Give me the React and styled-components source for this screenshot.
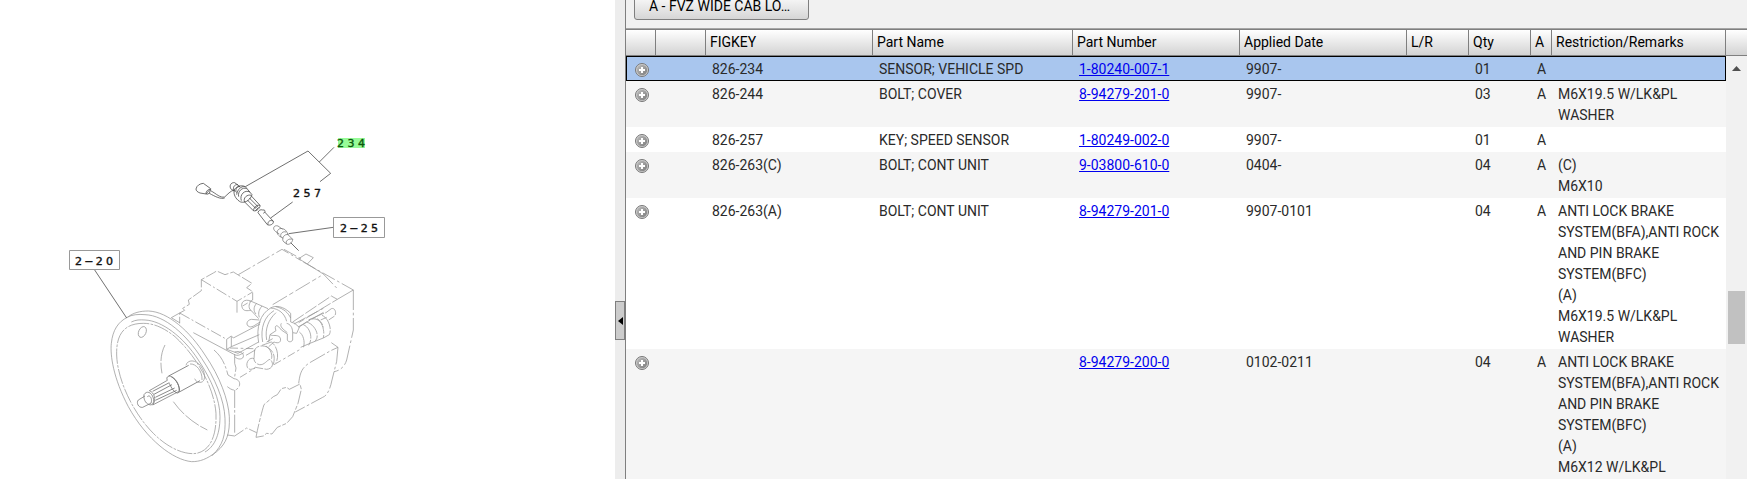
import styled, { createGlobalStyle } from 'styled-components';

const COLORS = {
  text: '#2a2a2a',
  link: '#0000ee',
  line: '#7f7f7f',
  panel: '#f1f1f1',
  stripe: '#f5f5f5',
  selected: '#a9c6ee',
};

const GlobalStyle = createGlobalStyle`
  * {
    box-sizing: border-box;
  }

  body {
    margin: 0;
    background: #ffffff;
    font-family: Roboto, sans-serif;
    font-size: 14px;
    line-height: 21px;
    color: ${COLORS.text};
  }
`;

const Page = styled.div`
  display: grid;
  grid-template-columns: minmax(0, 615fr) 10px minmax(0, 1122fr);
  height: 100vh;
  overflow: hidden;
`;

const FigurePane = styled.section`
  min-height: 0;
  background: #ffffff;
`;

const Drawing = styled.svg`
  display: block;
  width: 100%;
  height: 100%;
  fill: none;
  stroke: #999999;
  stroke-width: 2.3;
  stroke-linejoin: round;
`;

const Callout = styled.text`
  font-family: 'DejaVu Sans', sans-serif;
  font-size: 11px;
  fill: ${({ $active }) => ($active ? '#0b5a0b' : '#111111')};
  stroke: ${({ $active }) => ($active ? '#0b5a0b' : '#111111')};
  stroke-width: 0.4;
`;

const Splitter = styled.div`
  display: flex;
  flex-direction: column;
  justify-content: center;
  background: #ededed;
  padding-top: 162px;
`;

const CollapseButton = styled.button`
  display: flex;
  align-items: center;
  justify-content: flex-end;
  width: 10px;
  height: 39px;
  padding: 0 1px 0 0;
  border: 1px solid ${COLORS.line};
  background: #cccccc;
`;

const PartsPane = styled.section`
  display: flex;
  flex-direction: column;
  min-width: 0;
  min-height: 0;
  border-left: 1px solid ${COLORS.line};
`;

const Toolbar = styled.div`
  display: flex;
  align-items: flex-end;
  flex: 0 0 29px;
  padding: 0 8px 8px;
  overflow: hidden;
  border-bottom: 1px solid #a6a6a6;
  background: ${COLORS.panel};
`;

const ModelButton = styled.button`
  flex: 0 0 auto;
  width: 175px;
  height: 28px;
  padding: 0 14px;
  border: 1px solid ${COLORS.line};
  border-radius: 3px;
  background: linear-gradient(#ffffff, #d6d6d6);
  font: inherit;
  line-height: 12px;
  color: #000000;
  text-align: left;
`;

const TableArea = styled.div`
  display: flex;
  flex: 1;
  min-height: 0;
`;

const TableViewport = styled.div`
  flex: 1;
  min-width: 0;
  overflow: hidden;
`;

const Table = styled.table`
  width: 100%;
  table-layout: fixed;
  border-collapse: separate;
  border-spacing: 0;
`;

const Column = styled.col`
  width: ${({ $width }) => ($width ? `${$width}px` : 'auto')};
`;

const HeaderCell = styled.th`
  height: 27px;
  padding: 0 0 0 4px;
  border-top: 1px solid ${COLORS.line};
  border-right: 1px solid ${COLORS.line};
  border-bottom: 1px solid ${COLORS.line};
  background: linear-gradient(#ffffff, #d3d3d3);
  color: #000000;
  font-weight: 400;
  text-align: left;
  white-space: nowrap;
`;

const PartRow = styled.tr`
  background: #ffffff;

  &:nth-child(even) {
    background: ${COLORS.stripe};
  }

  &[aria-selected='true'] {
    background: ${COLORS.selected};
    outline: 1px solid #000000;
    outline-offset: -1px;
  }
`;

const Cell = styled.td`
  padding: 3px 0 1px 6px;
  vertical-align: top;
  white-space: pre-line;
`;

const IconCell = styled.td`
  padding: 7px 0 0 9px;
  vertical-align: top;
`;

const ExpandButton = styled.button`
  display: block;
  width: 14px;
  height: 14px;
  padding: 0;
  border: 0;
  background: none;
`;

const PartLink = styled.a`
  color: ${COLORS.link};
`;

const ScrollColumn = styled.div`
  display: flex;
  flex-direction: column;
  flex: 0 0 21px;
  background: ${COLORS.panel};
`;

const ScrollCap = styled.div`
  flex: 0 0 27px;
  border-top: 1px solid ${COLORS.line};
  border-bottom: 1px solid ${COLORS.line};
  background: linear-gradient(#ffffff, #d3d3d3);
`;

const ScrollUp = styled.button`
  display: flex;
  align-items: center;
  justify-content: center;
  flex: 0 0 24px;
  padding: 0;
  border: 0;
  background: none;
`;

const ScrollGap = styled.div`
  flex: ${({ $share }) => $share} 0 0;
`;

const ScrollThumb = styled.div`
  flex: 0 0 53px;
  margin: 0 2px;
  background: #c1c1c1;
`;

const columns = [
  { key: 'expand', label: '', width: 30 },
  { key: 'mark', label: '', width: 50 },
  { key: 'figkey', label: 'FIGKEY', width: 167 },
  { key: 'name', label: 'Part Name', width: 200 },
  { key: 'number', label: 'Part Number', width: 167 },
  { key: 'date', label: 'Applied Date', width: 167 },
  { key: 'side', label: 'L/R', width: 62 },
  { key: 'qty', label: 'Qty', width: 62 },
  { key: 'a', label: 'A', width: 21 },
  { key: 'remarks', label: 'Restriction/Remarks' },
];

const BRAKE = 'ANTI LOCK BRAKE SYSTEM(BFA),ANTI ROCK AND PIN BRAKE SYSTEM(BFC)';

const parts = [
  { figkey: '826-234', name: 'SENSOR; VEHICLE SPD', number: '1-80240-007-1', date: '9907-', qty: '01', remarks: '' },
  { figkey: '826-244', name: 'BOLT; COVER', number: '8-94279-201-0', date: '9907-', qty: '03', remarks: 'M6X19.5 W/LK&PL WASHER' },
  { figkey: '826-257', name: 'KEY; SPEED SENSOR', number: '1-80249-002-0', date: '9907-', qty: '01', remarks: '' },
  { figkey: '826-263(C)', name: 'BOLT; CONT UNIT', number: '9-03800-610-0', date: '0404-', qty: '04', remarks: '(C)\nM6X10' },
  { figkey: '826-263(A)', name: 'BOLT; CONT UNIT', number: '8-94279-201-0', date: '9907-0101', qty: '04', remarks: `${BRAKE}\n(A)\nM6X19.5 W/LK&PL WASHER` },
  { figkey: '', name: '', number: '8-94279-200-0', date: '0102-0211', qty: '04', remarks: `${BRAKE}\n(A)\nM6X12 W/LK&PL` },
];

const PlusIcon = () => (
  <svg width="14" height="14" viewBox="0 0 14 14" aria-hidden="true">
    <defs>
      <linearGradient id="plusFill" x1="0" y1="0" x2="1" y2="1">
        <stop offset="0" stopColor="#bdbdbd" />
        <stop offset="1" stopColor="#7c7c7c" />
      </linearGradient>
    </defs>
    <circle cx="7" cy="7" r="6.5" fill="#d0d0d0" stroke="#777777" strokeWidth="1" />
    <circle cx="7" cy="7" r="5.2" fill="url(#plusFill)" />
    <path d="M7 4v6M4 7h6" stroke="#ffffff" strokeWidth="2" />
  </svg>
);

// Gearbox, drawn at three units to the pixel
const Gearbox = () => (
  <g transform="translate(90 240) scale(0.33333)">
    {/* clutch housing rim */}
    <path d="M112 232C130 218 150 213 175 213C235 215 300 275 345 345C390 410 415 480 418 530C420 580 410 610 380 635C350 658 330 665 305 665C250 660 170 600 115 500C70 415 60 345 64 310C68 270 85 245 112 232Z" />
    <path d="M112 232C125 224 145 222 165 224C225 226 290 285 335 355C375 415 403 480 405 535C407 585 400 615 365 648" />
    <path d="M124 246C138 239 150 239 165 240C215 242 280 290 325 360C365 420 390 480 390 530C390 590 370 622 345 636" />
    <path d="M160 250C105 250 78 280 80 345C82 420 130 520 190 580C240 630 290 645 320 640C365 630 380 580 378 520C372 440 320 350 255 290C220 262 190 250 160 250Z" strokeDasharray="46 4 8 4" />
    <ellipse cx="157" cy="276" rx="11" ry="17" transform="rotate(24 157 276)" />
    <path d="M225 315C212 340 210 370 216 400M250 485C275 520 310 550 352 570" strokeDasharray="50 5" />
    {/* input shaft */}
    <path d="M165 468L145 480C138 488 145 504 158 502L184 489" stroke="#777777" />
    <path d="M178 452L232 421M188 495L265 455M162 464C170 451 184 456 190 474C194 489 186 499 176 493C166 490 160 476 162 464ZM172 470C180 462 188 478 183 489M178 452C193 457 200 480 188 495" stroke="#777777" />
    <path d="M188 454L238 428M192 463L246 434M196 472L254 444M196 481L260 451" stroke="#666666" />
    <path d="M232 421C226 408 242 402 254 418C268 434 274 458 262 459C252 457 244 444 238 430M236 408L296 376M268 456L330 422M244 411C260 416 272 442 266 457" stroke="#666666" />
    <path d="M288 376C292 358 318 358 332 378C350 402 346 430 328 427C320 428 318 422 314 416M300 372C318 370 338 394 336 420" />
    {/* gear case */}
    <path d="M244 233L269 219V250M244 233L270 249M269 219L284 211L278 205L298 193L295 180L334 152V119L370 99L380 93L405 104L430 96L486 130L470 143L488 155V180L458 198" strokeDasharray="34 6" />
    <path d="M334 119L441 184L488 156M441 184V222M269 219L410 298" strokeDasharray="34 7 6 7" />
    <path d="M445 104L576 28L632 61M582 28L636 58M640 66L790 150M700 102L742 146" strokeDasharray="42 8 8 8" />
    <path d="M626 56L648 42L670 53L652 72L626 56M652 72L700 102" />
    <path d="M790 150V270L770 360C764 380 750 392 732 395M790 150L742 178" strokeDasharray="60 8 8 8" />
    <path d="M548 194L692 108" strokeDasharray="50 8 14 8" />
    <path d="M310 278L430 342C445 352 455 340 462 338M410 298L424 288L430 294L510 252M410 298V328L424 320V290M424 320L508 284M410 328L444 340L506 306M434 336C452 330 466 344 458 354C450 360 440 356 434 350" />
    <path d="M372 330C396 350 406 375 414 405M434 342V370L438 384L434 410M414 405L432 416C452 418 454 438 440 448C430 454 420 446 412 440M434 450V580M412 585L434 588L470 564L500 578" strokeDasharray="54 6 8 6" />
    {/* shift tower and motor */}
    <path d="M458 206C448 188 464 174 484 184L534 206M458 206C464 216 478 210 484 212L506 236M484 184C474 192 476 208 484 212M500 190C490 200 490 214 498 222M516 198C506 210 504 220 508 232" />
    <path d="M508 240L484 238C470 240 466 256 478 260C488 264 500 250 512 246" />
    <path d="M506 308C498 262 510 222 542 204C556 195 580 198 602 220V246L614 250L628 262L620 280L608 278V300C604 308 594 306 592 300V282L574 270C560 250 552 256 558 272L540 284L536 306M518 306C510 264 524 228 552 212M530 300C524 266 536 238 558 218M542 204C566 206 584 220 590 244M558 200C582 206 594 218 602 234" />
    <path d="M574 250C568 260 580 268 592 278M590 250C600 252 608 262 608 278M540 284C550 290 560 282 570 292C576 306 566 312 552 306L536 320M548 296L530 306" />
    <path d="M608 246L724 168L742 178L626 248M612 252L700 205M626 260L706 214" strokeDasharray="40 6" />
    <path d="M626 262L650 246M632 322L660 310M640 254C660 262 670 294 656 316M628 276C640 284 646 306 640 324M650 246C676 254 692 290 674 304M660 310L700 294M656 240C676 230 696 242 700 262M682 236C700 250 704 278 700 294M696 226C716 234 726 268 718 284L700 294M656 240L696 222L708 218L724 206C736 202 740 220 734 228L716 240M692 240L710 232" strokeDasharray="50 4" />
    <path d="M492 356C480 350 466 366 472 382C478 392 488 388 496 382L530 388C550 386 552 368 540 358C530 360 524 376 508 374C498 372 492 364 492 356ZM492 356L494 330C500 316 522 314 536 324C552 336 556 350 550 374M516 316L544 306C562 318 568 350 558 368M496 330L468 346M528 318C544 330 548 346 544 358" strokeDasharray="44 4" />
    <path d="M450 412L496 384M552 374L634 326M420 324L490 326" strokeDasharray="24 8 8 8" />
    {/* side covers */}
    <path d="M626 430C630 400 634 386 656 370L722 332L744 322L724 308M744 322L740 364L726 420C720 450 710 468 698 472L616 516" strokeDasharray="52 7 8 7" />
    <path d="M498 592C504 560 514 520 522 494L550 470L562 464L574 446L590 442L598 448L630 432L634 448L624 490L608 530L590 550L562 562L546 582L530 580L520 588L498 592Z" strokeDasharray="42 5 12 5" />
  </g>
);

const SpeedSensor = () => (
  <g transform="translate(50 120) scale(0.33333)" stroke="#444444">
    <path d="M852 82L808 126M586 200L774 93L842 160L810 185M728 246L662 294M716 341L850 322M722 368L746 392M134 450L230 594" />
    {/* connector and lead */}
    <path d="M438 207C440 196 450 191 460 190L482 206L468 222L450 219C442 216 438 212 438 207ZM482 208C474 206 464 218 470 223L478 220ZM482 212C500 222 510 234 524 231C534 222 540 214 552 210M478 220C496 230 512 238 524 234" />
    {/* sensor body */}
    <path d="M554 188C542 186 536 200 544 208L556 214M554 188L570 200M564 194C552 192 546 206 554 212M570 200C560 198 554 212 560 218M552 216C550 204 570 192 586 200L606 224C602 238 588 250 572 246C560 240 552 228 552 216ZM566 230C562 214 578 200 590 206M560 224C562 208 574 198 584 200M574 242C568 224 584 208 600 216M584 246C578 234 592 222 604 226M584 246L610 272C612 262 618 254 630 256L604 228M592 240L616 264M598 234L622 258M610 272C620 276 632 262 630 256M614 266L624 258M616 272L626 262" />
    <path d="M624 278L652 314C660 318 672 312 670 304L644 276M624 278C626 270 632 268 638 270C646 268 648 276 640 280M654 314C652 304 662 298 670 304" />
    <path d="M684 318C672 314 666 326 676 334L688 342M684 318L698 328M698 326C684 322 676 338 686 346C690 352 696 350 700 356M698 326C708 328 712 338 714 344L728 358M708 336C696 332 688 346 694 352M716 344C702 340 692 358 702 366M728 358C716 354 704 364 710 372C716 376 728 368 728 358M702 366L710 372" stroke="#777777" />
  </g>
);

const Figure = () => (
  <Drawing viewBox="0 0 615 479" preserveAspectRatio="xMinYMin meet" role="img" aria-label="826 speed sensor">
    <Gearbox />
    <SpeedSensor />
    <rect x="338" y="138" width="27" height="10" fill="#98fb98" stroke="none" />
    <rect x="333.5" y="217.5" width="51" height="20" strokeWidth="1" />
    <rect x="69.5" y="250.5" width="50" height="19" strokeWidth="1" />
    <Callout $active x="337" y="147">2 3 4</Callout>
    <Callout x="293" y="197">2 5 7</Callout>
    <Callout x="340" y="232">2{'\u2009'}−{'\u2009'}2 5</Callout>
    <Callout x="75" y="265">2{'\u2009'}−{'\u2009'}2 0</Callout>
  </Drawing>
);

const PartsTable = () => (
  <Table>
    <colgroup>
      {columns.map((column) => (
        <Column key={column.key} $width={column.width} />
      ))}
    </colgroup>
    <thead>
      <tr>
        {columns.map((column) => (
          <HeaderCell key={column.key} scope="col">{column.label}</HeaderCell>
        ))}
      </tr>
    </thead>
    <tbody>
      {parts.map((part, index) => (
        <PartRow key={index} aria-selected={index === 0}>
          <IconCell>
            <ExpandButton type="button" aria-label={`Expand ${part.number}`}>
              <PlusIcon />
            </ExpandButton>
          </IconCell>
          <Cell />
          <Cell>{part.figkey}</Cell>
          <Cell>{part.name}</Cell>
          <Cell>
            <PartLink href={`#${part.number}`}>{part.number}</PartLink>
          </Cell>
          <Cell>{part.date}</Cell>
          <Cell />
          <Cell>{part.qty}</Cell>
          <Cell>A</Cell>
          <Cell>{part.remarks}</Cell>
        </PartRow>
      ))}
    </tbody>
  </Table>
);

const App = () => (
  <>
    <GlobalStyle />
    <Page>
      <FigurePane>
        <Figure />
      </FigurePane>
      <Splitter>
        <CollapseButton type="button" aria-label="Collapse figure">
          <svg width="5" height="8" viewBox="0 0 5 8" aria-hidden="true">
            <path d="M5 0v8L0 4z" fill="#000000" />
          </svg>
        </CollapseButton>
      </Splitter>
      <PartsPane>
        <Toolbar>
          <ModelButton type="button">A - FVZ WIDE CAB LO…</ModelButton>
        </Toolbar>
        <TableArea>
          <TableViewport>
            <PartsTable />
          </TableViewport>
          <ScrollColumn>
            <ScrollCap />
            <ScrollUp type="button" aria-label="Scroll up">
              <svg width="9" height="5" viewBox="0 0 9 5" aria-hidden="true">
                <path d="M0 5h9L4.500 0z" fill="#505050" />
              </svg>
            </ScrollUp>
            <ScrollGap $share={211} />
            <ScrollThumb />
            <ScrollGap $share={135} />
          </ScrollColumn>
        </TableArea>
      </PartsPane>
    </Page>
  </>
);

export default App;
